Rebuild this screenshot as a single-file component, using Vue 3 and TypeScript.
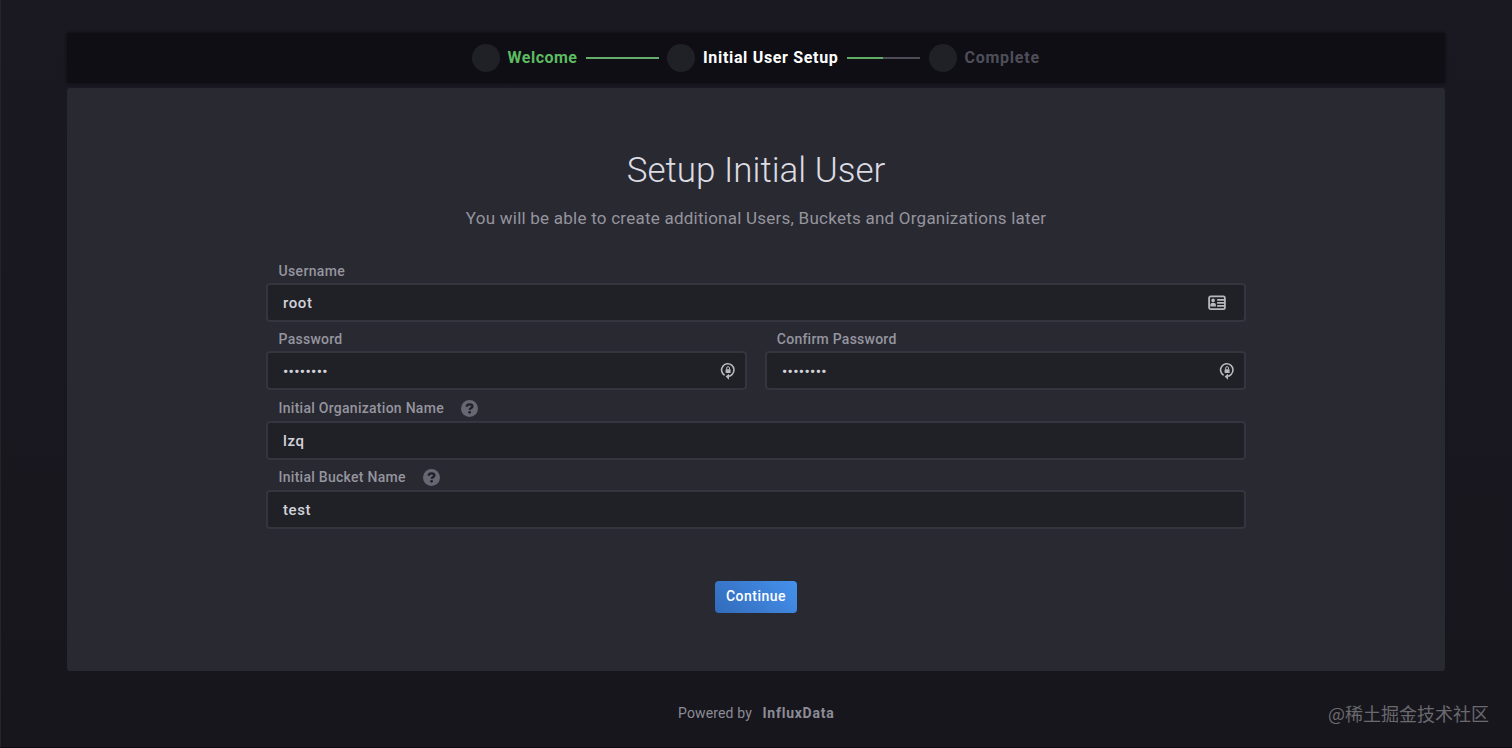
<script setup lang="ts">
import { ref } from 'vue'

interface Field {
  id: string
  label: string
  value: string
  kind: 'text' | 'password'
  help?: boolean
  icon?: 'card' | 'lock'
}

const steps = [
  { title: 'Welcome', state: 'done' },
  { title: 'Initial User Setup', state: 'current' },
  { title: 'Complete', state: 'next' },
]

const rows = ref<Field[][]>([
  [{ id: 'username', label: 'Username', value: 'root', kind: 'text', icon: 'card' }],
  [
    { id: 'password', label: 'Password', value: '••••••••', kind: 'password', icon: 'lock' },
    { id: 'confirm', label: 'Confirm Password', value: '••••••••', kind: 'password', icon: 'lock' },
  ],
  [{ id: 'org', label: 'Initial Organization Name', value: 'lzq', kind: 'text', help: true }],
  [{ id: 'bucket', label: 'Initial Bucket Name', value: 'test', kind: 'text', help: true }],
])
</script>

<template>
  <div class="page">
    <nav class="steps">
      <template v-for="(step, i) in steps" :key="step.title">
        <span v-if="i > 0" class="connector" :class="{ half: i === 2 }"></span>
        <span class="circle"></span>
        <span class="step-title" :class="step.state">{{ step.title }}</span>
      </template>
    </nav>

    <main class="panel">
      <h1 class="heading">Setup Initial User</h1>
      <p class="sub">You will be able to create additional Users, Buckets and Organizations later</p>

      <form class="form" @submit.prevent>
        <div v-for="(row, r) in rows" :key="r" class="row">
          <div v-for="field in row" :key="field.id" class="field">
            <div class="label-line" :class="{ 'with-help': field.help }">
              <span class="label" :class="'label-' + field.id">{{ field.label }}</span>
              <svg v-if="field.help" class="help" viewBox="0 0 17 17">
                <circle cx="8.5" cy="8.5" r="8.5" fill="#676773" />
                <path d="M5.7 6.8C5.8 5.2 7 4.4 8.6 4.4c1.6 0 2.8.7 2.8 2 0 1.7-2.6 1.6-2.7 3.5" fill="none" stroke="#202028" stroke-width="2.3" />
                <circle cx="8.6" cy="12.3" r="1.35" fill="#202028" />
              </svg>
            </div>
            <div class="input">
              <span class="value" :class="field.kind">{{ field.value }}</span>
              <svg v-if="field.icon === 'card'" class="card-icon" viewBox="0 0 18 16">
                <rect x="1.1" y="1.4" width="15.8" height="12.8" rx="1.6" fill="none" stroke="#b7b7bd" stroke-width="1.8" />
                <circle cx="5.1" cy="5.4" r="1.8" fill="#b7b7bd" />
                <path d="M2.3 11.5V9.8c0-1.4 1.1-2.1 2.8-2.1s2.8.7 2.8 2.1v1.7z" fill="#b7b7bd" />
                <path d="M9.1 4.9h7M9.1 7.9h7M9.1 10.9h7" stroke="#b7b7bd" stroke-width="1.7" />
              </svg>
              <svg v-if="field.icon === 'lock'" class="lock-icon" viewBox="0 0 16 18">
                <path d="M4.6 13.3A6.2 6.2 0 1 1 12.3 12.2Q11 14.2 7.8 14.4" fill="none" stroke="#b7b7bd" stroke-width="1.6" />
                <path d="M9 11.7v6L5.6 14.6z" fill="#b7b7bd" />
                <rect x="5.6" y="7.2" width="5" height="3.8" rx=".5" fill="#b7b7bd" />
                <path d="M6.7 7.4V6a1.4 1.4 0 0 1 2.8 0V7.4" fill="none" stroke="#b7b7bd" stroke-width="1" />
              </svg>
            </div>
          </div>
        </div>
        <button class="continue" type="submit"><span>Continue</span></button>
      </form>
    </main>

    <footer class="footer">
      <span class="powered">Powered by</span>
      <strong class="brand">InfluxData</strong>
    </footer>
    <div class="watermark">@稀土掘金技术社区</div>
  </div>
</template>

<style>
body {
  background: #18171e;
  overflow: hidden;
}
</style>

<style scoped>
.page {
  position: relative;
  box-sizing: border-box;
  width: 1512px;
  height: 748px;
  padding: 33px 67px 0 66px;
  border-left: 1px solid #24242a;
  border-bottom: 1px solid #0c0b10;
  background: linear-gradient(#1a1820, #17161d);
  font-family: Roboto, "Liberation Sans", sans-serif;
  overflow: hidden;
}
.steps {
  display: flex;
  align-items: center;
  box-sizing: border-box;
  height: 50px;
  padding-left: 404.5px;
  background: #0f0e14;
  box-shadow: 0 0 3px #0f0e14;
}
.circle {
  width: 28px;
  height: 28px;
  border-radius: 50%;
  background: #202027;
}
.step-title {
  margin-left: 8px;
  font-size: 16px;
  line-height: 20px;
  font-weight: 700;
  white-space: nowrap;
}
.done { width: 70px; color: #5dbb62; letter-spacing: 0.5px; }
.current { width: 136px; color: #fff; letter-spacing: 0.67px; }
.next { width: 78px; color: #4e4e5a; letter-spacing: 0.75px; }
.connector {
  width: 73px;
  height: 2px;
  margin: 0 8.5px 0 8px;
  background: #66ad6d;
}
.connector.half {
  background: linear-gradient(90deg, #5eae65 50%, #4d4d58 50%);
}
.panel {
  box-sizing: border-box;
  height: 583px;
  margin-top: 5px;
  padding: 61px 199px 0;
  border-radius: 3px;
  background: #292932;
}
.heading {
  margin: 0;
  font-size: 35px;
  line-height: 44px;
  font-weight: 300;
  text-align: center;
  white-space: nowrap;
  color: #dcdce3;
}
.sub {
  margin: 15px 0 0;
  font-size: 17px;
  line-height: 20px;
  letter-spacing: 0.24px;
  text-align: center;
  white-space: nowrap;
  color: #95959e;
}
.form {
  display: flex;
  flex-direction: column;
  margin-top: 31px;
}
.row {
  display: grid;
  grid-auto-flow: column;
  grid-auto-columns: 1fr;
  gap: 18px;
  height: 69px;
}
.row:first-child { height: 68px; }
.row:nth-child(2) { height: 70px; }
.label-line {
  display: flex;
  align-items: center;
  box-sizing: border-box;
  height: 24px;
  padding-left: 12.5px;
}
.with-help { padding-bottom: 2px; }
.label {
  font-size: 14px;
  line-height: 20px;
  font-weight: 500;
  letter-spacing: 0.27px;
  white-space: nowrap;
  color: #95959f;
}
.label-username { letter-spacing: 0.35px; }
.label-confirm { margin-left: -0.7px; letter-spacing: 0.24px; }
.label-org { width: 166px; }
.label-bucket { width: 128px; }
.help {
  width: 17px;
  height: 17px;
  margin-left: 16px;
}
.input {
  display: flex;
  align-items: center;
  box-sizing: border-box;
  height: 39px;
  padding-left: 15px;
  border: 2px solid #353540;
  border-radius: 4px;
  background: #202027;
}
.value {
  flex: 1;
  font-size: 15px;
  line-height: 20px;
  font-weight: 500;
  letter-spacing: 0.6px;
  color: #d2d2d9;
}
.password {
  padding-top: 2px;
  letter-spacing: 0.38px;
}
.card-icon {
  width: 18px;
  height: 16px;
  margin-right: 18px;
}
.lock-icon {
  width: 16px;
  height: 18px;
  margin-right: 9px;
}
.continue {
  align-self: center;
  width: 82px;
  height: 32px;
  margin: 46px 0 0;
  padding: 0 0 2px;
  border: 0;
  border-radius: 4px;
  background: linear-gradient(45deg, #326bba, #4591ed);
  color: #fff;
  font-family: inherit;
  font-size: 14px;
  font-weight: 500;
  letter-spacing: 0.5px;
  white-space: nowrap;
}
.footer {
  display: flex;
  margin: 32px 0 0 611px;
  color: #8c8c96;
  font-size: 14px;
  line-height: 20px;
  white-space: nowrap;
}
.powered {
  width: 84.5px;
  letter-spacing: 0.15px;
}
.brand { letter-spacing: 0.75px; }
.watermark {
  position: absolute;
  right: 23px;
  bottom: 22px;
  color: #6a696e;
  font: 18px/24px "Noto Sans CJK SC", sans-serif;
  white-space: nowrap;
}
</style>
